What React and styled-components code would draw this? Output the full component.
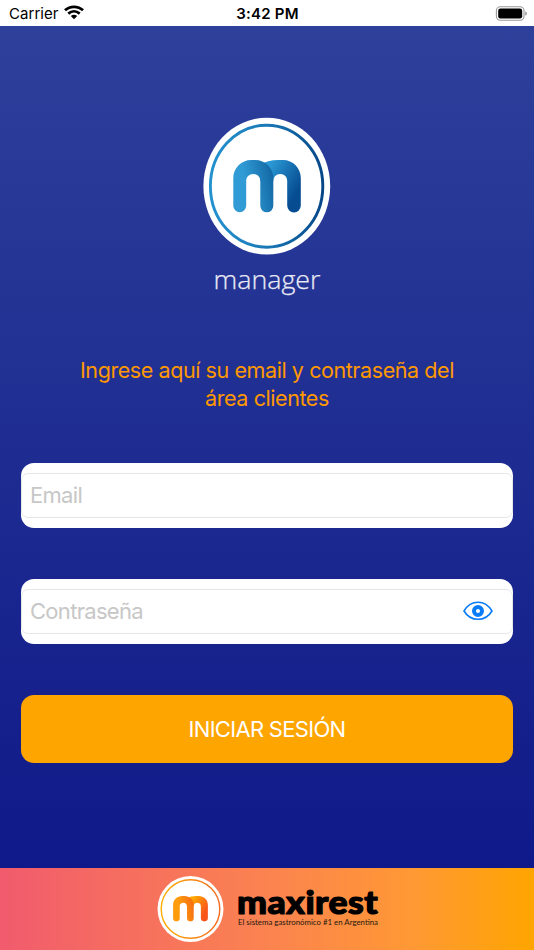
import React from "react";
import styled, { createGlobalStyle } from "styled-components";

const GlobalStyle = createGlobalStyle`
  * { box-sizing: border-box; }
  body { margin: 0; font-family: Inter, "Liberation Sans", sans-serif; }
`;

const Screen = styled.div`
  display: flex;
  flex-direction: column;
  height: 950px;
  overflow: hidden;
`;

const StatusBar = styled.header`
  display: grid;
  grid-template-columns: 1fr auto 1fr;
  align-items: center;
  height: 26px;
  padding: 2px 8px 0 9px;
  background: #fff;
  color: #000;
  font-size: 15px;
  line-height: 24px;
`;

const Carrier = styled.div`
  display: flex;
  align-items: center;
  gap: 5px;
  letter-spacing: 0.05px;
  svg { margin-top: -3px; }
`;

const Clock = styled.div`
  font-weight: 600;
  letter-spacing: 0.2px;
`;

const Battery = styled.div`
  display: flex;
  justify-content: flex-end;
  svg { margin: -2px -2px 0 0; }
`;

const Main = styled.main`
  display: flex;
  flex-direction: column;
  align-items: center;
  height: 842px;
  padding: 91px 21px 0;
  background: linear-gradient(#2d409a, #101989);
`;

const Prompt = styled.p`
  width: 400px;
  margin: 57px 0 0;
  color: #ff9800;
  font-size: 21.5px;
  line-height: 28px;
  letter-spacing: -0.42px;
  text-align: center;
`;

const Form = styled.form`
  display: flex;
  flex-direction: column;
  gap: 51.5px;
  width: 100%;
  margin-top: 51px;
`;

const Field = styled.label`
  display: block;
  height: 64.5px;
  padding: 10px 0;
  overflow: hidden;
  border-radius: 13px;
  background: #fff;
`;

const FieldInner = styled.span`
  display: flex;
  align-items: center;
  height: 44.5px;
  padding: 0 19px 0 8px;
  border: 1px solid #e6e6e6;
  border-radius: 7px;
  svg { margin-top: -1px; }
`;

const Input = styled.input`
  flex: 1;
  min-width: 0;
  height: 40px;
  padding: 0;
  border: 0;
  outline: 0;
  background: transparent;
  font: 22px Inter, "Liberation Sans", sans-serif;
  letter-spacing: -0.7px;
  &::placeholder { color: #c7c7c7; opacity: 1; }
`;

const SubmitButton = styled.button`
  height: 67.5px;
  padding: 0;
  border: 0;
  border-radius: 13px;
  background: #ffa500;
  color: #fff;
  font: 22px Inter, "Liberation Sans", sans-serif;
  letter-spacing: -0.7px;
`;

const Footer = styled.footer`
  display: flex;
  align-items: flex-start;
  justify-content: center;
  gap: 13px;
  height: 82px;
  padding: 8px 0 0 1px;
  background: linear-gradient(90deg, #f15b6d, #fb8350 50%, #ff9933 78%, #ffa500);
`;

const Wordmark = styled.div`
  display: flex;
  flex-direction: column;
  width: 142px;
  padding-top: 4px;
`;

function WifiIcon() {
  return (
    <svg width="20" height="15" viewBox="0 0 20 15" fill="none" stroke="#000" strokeWidth="2.8">
      <path d="M1 5.3C6 .6 14 .6 19 5.3M4.3 8.6C7.7 5.6 12.3 5.6 15.7 8.6" />
      <path d="M6.8 11Q10 8.5 13.2 11L10 14.2Z" fill="#000" stroke="none" />
    </svg>
  );
}

function BatteryIcon() {
  return (
    <svg width="33" height="15" viewBox="0 0 33 15">
      <rect x="1.4" y=".7" width="27.6" height="13.6" rx="4" fill="none" stroke="#999" strokeWidth="1.1" />
      <rect x="3.2" y="2.5" width="24" height="10" rx="2.2" />
      <path d="M30.2 5.2Q32 6 32 7.5T30.2 9.8Z" fill="#999" />
    </svg>
  );
}

function EyeIcon() {
  return (
    <svg width="30" height="20" viewBox="0 0 30 20" fill="none" stroke="#087cf8">
      <path d="M1 10C4 5 9 1.3 15 1.3S26 5 29 10C26 15 21 18.3 15 18.3S4 15 1 10Z" strokeWidth="1.6" strokeLinejoin="round" />
      <circle cx="15" cy="10" r="4" strokeWidth="4" />
    </svg>
  );
}

function Monogram({ id, from, mid, to, overlap }) {
  return (
    <g>
      <defs>
        <linearGradient id={`${id}-left`} gradientUnits="userSpaceOnUse" x1="40" y1="70" x2="71" y2="64">
          <stop offset=".1" stopColor={from} />
          <stop offset="1" stopColor={mid} />
        </linearGradient>
        <linearGradient id={`${id}-right`} gradientUnits="userSpaceOnUse" x1="66" y1="50" x2="98" y2="68">
          <stop stopColor={overlap} />
          <stop offset="1" stopColor={to} />
        </linearGradient>
      </defs>
      <path
        d="M57 48C62 44.5 68 43 75 43H80C90 43 97.8 51 97.8 61V88.6A6.8 6.8 0 0 1 84.2 88.6V64C84.2 60 81.5 57 77.3 57S70.3 60 70.3 64H57Z"
        fill={`url(#${id}-right)`}
      />
      <path
        d="M30.3 61C30.3 51 38.3 43 48.3 43H52.3C62.3 43 70.3 51 70.3 61V88.8A6.5 6.5 0 0 1 57.3 88.8V64C57.3 60 54.4 57 50.2 57S43.2 60 43.2 64V88.8A6.45 6.45 0 0 1 30.3 88.8Z"
        fill={`url(#${id}-left)`}
      />
    </g>
  );
}

function ManagerLogo() {
  return (
    <svg width="128" height="182" viewBox="0 0 128 182">
      <defs>
        <linearGradient id="manager-ring">
          <stop stopColor="#2492cf" />
          <stop offset=".5" stopColor="#1979b6" />
          <stop offset="1" stopColor="#064789" />
        </linearGradient>
      </defs>
      <ellipse cx="63.8" cy="69.2" rx="63.4" ry="68.4" fill="#fff" />
      <ellipse cx="63.6" cy="69.2" rx="56.2" ry="61" fill="none" stroke="url(#manager-ring)" strokeWidth="2.9" />
      <Monogram id="manager" from="#309bd5" mid="#1268a4" to="#064c91" overlap="#2a98d4" />
      <text x="10.5" y="172" textLength="107" lengthAdjust="spacingAndGlyphs" fill="#e9eaf4" stroke="#e9eaf4" strokeWidth=".25" fontFamily="Open Sans, Noto Sans, sans-serif" fontWeight="300" fontSize="26.5">manager</text>
    </svg>
  );
}

function MaxirestBadge() {
  return (
    <svg width="67" height="67" viewBox="0 0 67 67">
      <defs>
        <linearGradient id="maxirest-ring">
          <stop stopColor="#ffad00" />
          <stop offset="1" stopColor="#f36b21" />
        </linearGradient>
      </defs>
      <circle cx="33.5" cy="33" r="33" fill="#fff" />
      <circle cx="33.5" cy="33" r="29.3" fill="none" stroke="url(#maxirest-ring)" strokeWidth="1.4" />
      <g transform="translate(.5 -.7) scale(.515 .483)">
        <Monogram id="maxirest" from="#ff9c0b" mid="#f66e15" to="#f9541c" overlap="#ffad00" />
      </g>
    </svg>
  );
}

function MaxirestWordmark() {
  return (
    <Wordmark>
      <svg width="142" height="37" viewBox="0 0 142 37" overflow="visible">
        <text x="0" y="33.5" textLength="141" lengthAdjust="spacingAndGlyphs" fontFamily="Lato, sans-serif" fontWeight="900" fontSize="33" letterSpacing=".4" stroke="#000" strokeWidth="1.2" strokeLinejoin="round">maxirest</text>
      </svg>
      <svg width="142" height="12" viewBox="0 0 142 12" overflow="visible">
        <text x="1" y="8" textLength="140" lengthAdjust="spacingAndGlyphs" fill="#24180f" fontFamily="Lato, sans-serif" fontSize="7.5">El sistema gastronómico #1 en Argentina</text>
      </svg>
    </Wordmark>
  );
}

export default function App() {
  return (
    <>
      <GlobalStyle />
      <Screen>
        <StatusBar>
          <Carrier>Carrier<WifiIcon /></Carrier>
          <Clock>3:42 PM</Clock>
          <Battery><BatteryIcon /></Battery>
        </StatusBar>
        <Main>
          <ManagerLogo />
          <Prompt>Ingrese aquí su email y contraseña del área clientes</Prompt>
          <Form>
            <Field>
              <FieldInner><Input type="email" placeholder="Email" /></FieldInner>
            </Field>
            <Field>
              <FieldInner>
                <Input type="password" placeholder="Contraseña" />
                <EyeIcon />
              </FieldInner>
            </Field>
            <SubmitButton type="button">INICIAR SESIÓN</SubmitButton>
          </Form>
        </Main>
        <Footer>
          <MaxirestBadge />
          <MaxirestWordmark />
        </Footer>
      </Screen>
    </>
  );
}
